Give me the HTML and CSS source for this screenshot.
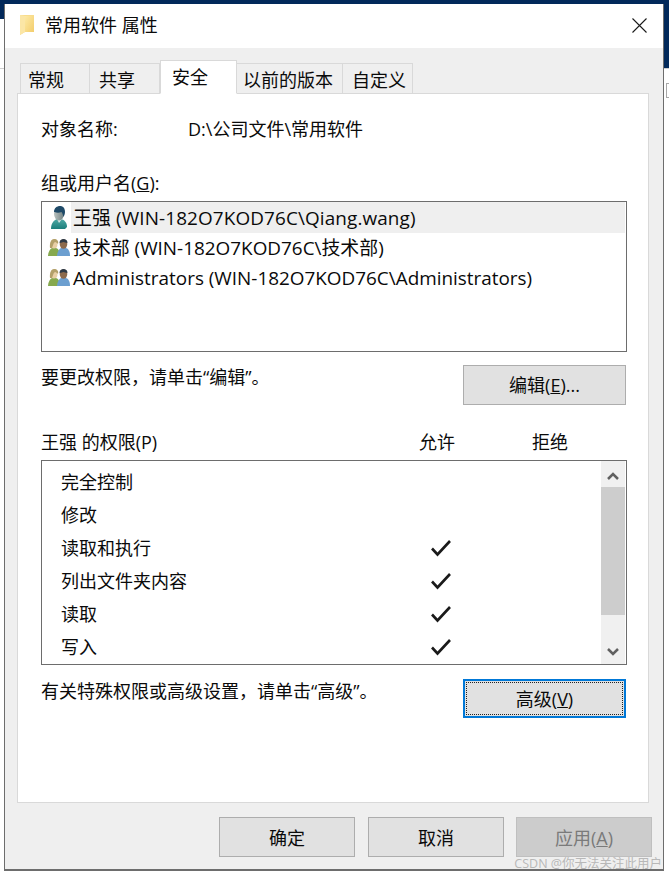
FILE: index.html
```html
<!DOCTYPE html>
<html lang="zh-CN">
<head>
    <meta charset="UTF-8">
    <meta name="viewport" content="width=device-width, initial-scale=1.0">
    <title>常用软件 属性</title>
    <link rel="stylesheet" href="styles.css">
</head>
<body>
    <!-- Window behind the dialog -->
    <div class="backdrop-top"></div>
    <div class="backdrop-left"></div>
    <div class="backdrop-right"></div>
    <div class="backdrop-line-left"></div>
    <div class="backdrop-line-right"></div>
    <div class="backdrop-box"></div>

    <svg class="icon-defs" width="0" height="0">
        <defs>
            <linearGradient id="face" x1="0" x2="1" y1="0" y2="0">
                <stop offset="0" stop-color="#b9c2c0"/>
                <stop offset="1" stop-color="#6f7f80"/>
            </linearGradient>
            <linearGradient id="shirt" x1="0" x2="0" y1="0" y2="1">
                <stop offset="0" stop-color="#4fa9a5"/>
                <stop offset="1" stop-color="#1c7f7c"/>
            </linearGradient>
            <linearGradient id="folder" x1="0" x2="1" y1="0" y2="1">
                <stop offset="0" stop-color="#fde9a4"/>
                <stop offset="1" stop-color="#f3cd6c"/>
            </linearGradient>
            <symbol id="user-one" viewBox="0 0 20 24">
                <path d="M2 23c0-6 3-9 6-10h4c4 1 6 4 6 8l-2 2z" fill="url(#shirt)"/>
                <path d="M8 13l2 4 3-4z" fill="#d6e6e4"/>
                <ellipse cx="10" cy="8" rx="5" ry="6.5" fill="url(#face)"/>
                <path d="M5 6c0-4 3-6 6-6 3 0 5 2 5 6 0 2-1 4-1.500 5-.5-2-1-4-2-5-2 1-5 1-7 0z" fill="#1f4a68"/>
            </symbol>
            <symbol id="user-group" viewBox="0 0 22 18">
                <path d="M0 17c0-4 2-7 4-8h4c3 1 4 4 4 8z" fill="#86a94e"/>
                <ellipse cx="6" cy="5" rx="3.500" ry="4.500" fill="#e8cfa6"/>
                <path d="M2 9c-.5-5 1-9 4-9s5 2 4 5c-1-1-2-2-3-2-2 1-2 4-3 6z" fill="#b3a06a"/>
                <path d="M9 17c0-4 2-7 4-8h5c3 1 4 4 4 8z" fill="#6c9fd0"/>
                <ellipse cx="15.500" cy="5" rx="3.800" ry="4.800" fill="#8c6a4c"/>
                <path d="M11.500 4c0-3 2-4 4-4s4 1 4 4c-2 0-3-1-4-1s-2 1-4 1z" fill="#2e3a46"/>
            </symbol>
            <symbol id="check" viewBox="0 0 22 18">
                <path d="M2 9.500l5.500 6L20 2" fill="none" stroke="#1a1a1a" stroke-width="2.600"/>
            </symbol>
        </defs>
    </svg>

    <div class="dialog">
        <div class="title-bar">
            <svg class="folder-icon" viewBox="0 0 14 20">
                <path d="M0 0h14v17H5l-5 3z" fill="#f8dc8c"/>
                <path d="M5 1h9v16H5z" fill="url(#folder)"/>
                <path d="M0 0l5 1v16l-5 3z" fill="#fbe6a6"/>
            </svg>
            <span class="title-text">常用软件 属性</span>
            <svg class="close-icon" viewBox="0 0 15 15">
                <path d="M.5.500l14 14M14.500.500l-14 14" stroke="#1a1a1a" stroke-width="1.100" fill="none"/>
            </svg>
        </div>

        <div class="tabs">
            <div class="tab tab-general">常规</div>
            <div class="tab tab-share">共享</div>
            <div class="tab tab-active">安全</div>
            <div class="tab tab-prev">以前的版本</div>
            <div class="tab tab-custom">自定义</div>
        </div>

        <div class="panel">
            <div class="object-row">
                <span class="object-label">对象名称:</span>
                <span>D:\公司文件\常用软件</span>
            </div>

            <div class="group-label">组或用户名(<u>G</u>):</div>
            <div class="user-list">
                <div class="user-row">
                    <svg class="user-icon-one"><use href="#user-one"/></svg>
                    <span class="user-name selected-name">王强 (WIN-182O7KOD76C\Qiang.wang)</span>
                </div>
                <div class="user-row">
                    <svg class="user-icon-group"><use href="#user-group"/></svg>
                    <span class="user-name">技术部 (WIN-182O7KOD76C\技术部)</span>
                </div>
                <div class="user-row">
                    <svg class="user-icon-group"><use href="#user-group"/></svg>
                    <span class="user-name">Administrators (WIN-182O7KOD76C\Administrators)</span>
                </div>
            </div>

            <div class="hint-row hint-edit">
                <span>要更改权限&#xFF0C;请单击“编辑”。</span>
                <button class="btn btn-side" type="button">编辑(<u>E</u>)...</button>
            </div>

            <div class="perm-header">
                <span class="perm-title">王强 的权限(P)</span>
                <span class="perm-allow">允许</span>
                <span class="perm-deny">拒绝</span>
            </div>
            <div class="perm-list">
                <div class="perm-rows">
                    <div class="perm-row"><span>完全控制</span></div>
                    <div class="perm-row"><span>修改</span></div>
                    <div class="perm-row"><span>读取和执行</span><svg class="check"><use href="#check"/></svg></div>
                    <div class="perm-row"><span>列出文件夹内容</span><svg class="check"><use href="#check"/></svg></div>
                    <div class="perm-row"><span>读取</span><svg class="check"><use href="#check"/></svg></div>
                    <div class="perm-row"><span>写入</span><svg class="check"><use href="#check"/></svg></div>
                </div>
                <div class="scrollbar">
                    <div class="scroll-btn">
                        <svg class="scroll-arrow" viewBox="0 0 12 8"><path d="M1 7l5-5 5 5" fill="none" stroke="#606060" stroke-width="2.500"/></svg>
                    </div>
                    <div class="scroll-thumb"></div>
                    <div class="scroll-rest">
                        <svg class="scroll-arrow" viewBox="0 0 12 8"><path d="M1 1l5 5 5-5" fill="none" stroke="#606060" stroke-width="2.500"/></svg>
                    </div>
                </div>
            </div>

            <div class="hint-row hint-advanced">
                <span>有关特殊权限或高级设置&#xFF0C;请单击“高级”。</span>
                <button class="btn btn-side btn-focus" type="button"><span class="focus-ring">高级(<u>V</u>)</span></button>
            </div>
        </div>

        <div class="footer">
            <button class="btn btn-footer btn-ok" type="button">确定</button>
            <button class="btn btn-footer" type="button">取消</button>
            <button class="btn btn-footer btn-disabled" type="button">应用(<u>A</u>)</button>
        </div>
    </div>

    <div class="watermark">CSDN @你无法关注此用户</div>
</body>
</html>
```

FILE: styles.css
```css
/* Global Styles */
* {
    box-sizing: border-box;
}

body {
    position: relative;
    width: 669px;
    height: 879px;
    margin: 0;
    padding: 4px 0 0 4px;
    overflow: hidden;
    background: #fff;
    color: #0a0a0a;
    font-family: "Open Sans", "Noto Sans CJK SC", sans-serif;
    font-size: 18px;
}

button {
    font: inherit;
    color: inherit;
}

.icon-defs {
    position: absolute;
}

/* Window behind the dialog */
.backdrop-top,
.backdrop-left,
.backdrop-right,
.backdrop-line-left,
.backdrop-line-right,
.backdrop-box {
    position: absolute;
}

.backdrop-top {
    left: 0;
    top: 0;
    width: 669px;
    height: 4px;
    background: #02295a;
}

.backdrop-left {
    left: 0;
    top: 0;
    width: 4px;
    height: 19px;
    background: #02295a;
}

.backdrop-right {
    left: 663px;
    top: 0;
    width: 6px;
    height: 68px;
    background: #02295a;
}

.backdrop-line-left {
    left: 0;
    top: 68px;
    width: 4px;
    height: 1px;
    background: #cfcfcf;
}

.backdrop-line-right {
    left: 664px;
    top: 68px;
    width: 5px;
    height: 1px;
    background: #cfcfcf;
}

.backdrop-box {
    left: 666px;
    top: 83px;
    width: 3px;
    height: 15px;
    border: 1px solid #a8a8a8;
    border-right: none;
}

/* Dialog */
.dialog {
    position: relative;
    width: 660px;
    height: 867px;
    background: #efefef;
    border-left: 1px solid #6d6d6d;
    border-right: 1px solid #6d6d6d;
    border-bottom: 2px solid #6d6d6d;
}

.title-bar {
    display: flex;
    align-items: center;
    height: 44px;
    padding: 0 0 2px 15px;
    background: #fff;
}

.folder-icon {
    width: 14px;
    height: 20px;
}

.title-text {
    margin: 0 0 2px 11px;
}

.close-icon {
    width: 15px;
    height: 15px;
    margin-left: auto;
    margin-right: 16px;
}

/* Tabs */
.tabs {
    display: flex;
    align-items: flex-end;
    height: 33px;
    margin-top: 12px;
    padding-left: 15px;
}

.tab {
    position: relative;
    height: 30px;
    line-height: 33px;
    background: #efefef;
    border: 1px solid #d9d9d9;
    border-bottom: none;
    white-space: nowrap;
}

.tab-general {
    width: 70px;
    padding-left: 7px;
}

.tab-share {
    width: 70px;
    padding-left: 9px;
    border-left: none;
}

.tab-active {
    z-index: 1;
    width: 77px;
    height: 34px;
    margin-bottom: -1px;
    padding-left: 11px;
    line-height: 33px;
    background: #fff;
    border-bottom: 1px solid #fff;
}

.tab-prev {
    width: 106px;
    padding-left: 6px;
    border-left: none;
}

.tab-custom {
    width: 70px;
    padding-left: 9px;
    border-left: none;
}

/* Security panel */
.panel {
    width: 632px;
    height: 710px;
    margin-left: 12px;
    padding: 22px 21px 0 23px;
    background: #fff;
    border: 1px solid #d9d9d9;
}

.object-row {
    display: flex;
    height: 26px;
    line-height: 26px;
}

.object-label {
    width: 147px;
}

.group-label {
    height: 26px;
    margin-top: 28px;
    line-height: 26px;
}

.user-list {
    height: 151px;
    margin-top: 5px;
    padding: 0 1px;
    border: 1px solid #6d6d6d;
}

.user-row {
    display: flex;
    align-items: center;
    height: 30px;
    padding-left: 5px;
}

.user-row:first-child {
    height: 31px;
}

.user-icon-one {
    width: 20px;
    height: 24px;
    margin-left: 1px;
}

.user-icon-group {
    width: 22px;
    height: 18px;
}

.user-name {
    margin-left: 3px;
    font-size: 18.9px;
    line-height: 32px;
    white-space: nowrap;
}

.selected-name {
    flex: 1;
    align-self: stretch;
    margin-left: 2px;
    padding-left: 2px;
    letter-spacing: 0.12px;
    background: #efefef;
}

.hint-row {
    display: flex;
    justify-content: space-between;
    padding-right: 1px;
}

.hint-edit {
    margin-top: 13px;
    line-height: 24px;
}

.hint-advanced {
    margin-top: 14px;
    line-height: 24px;
}

.perm-header {
    display: flex;
    height: 26px;
    margin-top: 24px;
    line-height: 26px;
}

.perm-title {
    width: 378px;
}

.perm-allow {
    width: 113px;
}

.perm-list {
    display: flex;
    height: 205px;
    margin-top: 5px;
    padding-right: 1px;
    border: 1px solid #6d6d6d;
}

.perm-rows {
    flex: 1;
    padding-top: 5px;
    overflow: hidden;
}

.perm-row {
    position: relative;
    height: 33px;
    padding-left: 19px;
    line-height: 33px;
}

.check {
    position: absolute;
    left: 388px;
    top: 7px;
    width: 22px;
    height: 18px;
}

/* Scrollbar */
.scrollbar {
    display: flex;
    flex-direction: column;
    width: 24px;
    background: #f0f0f0;
}

.scroll-btn {
    display: flex;
    justify-content: center;
    align-items: center;
    height: 26px;
    padding-top: 4px;
}

.scroll-thumb {
    height: 128px;
    background: #cdcdcd;
}

.scroll-rest {
    display: flex;
    flex: 1;
    justify-content: center;
    align-items: flex-end;
    padding-bottom: 8px;
}

.scroll-arrow {
    width: 12px;
    height: 8px;
}

/* Buttons */
.btn {
    background: #e1e1e1;
    border: 1px solid #adadad;
    padding: 0;
}

.btn-side {
    width: 163px;
    height: 40px;
}

.btn-focus {
    display: flex;
    height: 39px;
    padding: 1px;
    border: 2px solid #0078d7;
}

.focus-ring {
    display: flex;
    flex: 1;
    justify-content: center;
    align-items: center;
    border: 1px dotted #222;
}

.footer {
    display: flex;
    justify-content: flex-end;
    gap: 12px;
    margin-top: 14px;
    padding-right: 11px;
}

.btn-footer {
    width: 136px;
    height: 40px;
}

.btn-ok {
    margin-right: 1px;
}

.btn-disabled {
    background: #cccccc;
    border-color: #bfbfbf;
    color: #7a7a7a;
}

.watermark {
    position: absolute;
    right: 7px;
    top: 855px;
    color: #b8b8b8;
    font-size: 12.5px;
    line-height: 18px;
    white-space: nowrap;
}
```
